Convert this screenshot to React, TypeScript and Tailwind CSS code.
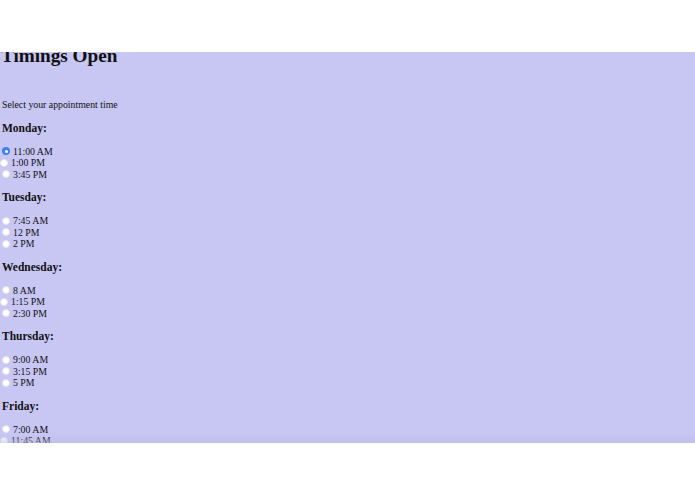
import React from "react";

type Slot = { label: string; tight?: boolean; checked?: boolean };

const schedule: { day: string; slots: Slot[] }[] = [
  {
    day: "Monday:",
    slots: [{ label: "11:00 AM", checked: true }, { label: "1:00 PM", tight: true }, { label: "3:45 PM" }],
  },
  { day: "Tuesday:", slots: [{ label: "7:45 AM" }, { label: "12 PM" }, { label: "2 PM" }] },
  { day: "Wednesday:", slots: [{ label: "8 AM" }, { label: "1:15 PM", tight: true }, { label: "2:30 PM" }] },
  { day: "Thursday:", slots: [{ label: "9:00 AM" }, { label: "3:15 PM" }, { label: "5 PM" }] },
  { day: "Friday:", slots: [{ label: "7:00 AM" }, { label: "11:45 AM", tight: true }] },
];

const Radio = ({ checked, tight }: { checked?: boolean; tight?: boolean }) =>
  checked ? (
    <span className="ml-[2px] mr-[3px] flex h-[8px] w-[8px] shrink-0 items-center justify-center rounded-full bg-[#3b82f6]">
      <span className="h-[3px] w-[3px] rounded-full bg-white" />
    </span>
  ) : (
    <span
      className={
        tight
          ? "ml-[0px] mr-[3px] h-[8px] w-[8px] shrink-0 rounded-full border border-[#e4e4ec] bg-white"
          : "ml-[2px] mr-[3px] h-[8px] w-[8px] shrink-0 rounded-full border border-[#e4e4ec] bg-white"
      }
    />
  );

export default function App() {
  return (
    <div className="h-[494px] w-[695px] bg-white font-['Liberation_Serif',serif] text-[#111]">
      <div className="h-[52px]" />
      <div className="relative h-[391px] overflow-hidden bg-[#c8c6f3]">
        <div className="-mt-[7px] flex flex-col">
          <h1 className="h-[22px] pl-[1px] text-[19.2px] font-bold leading-[22px]">Timings Open</h1>
          <p className="mt-[31.5px] h-[12px] pl-[2px] text-[9.8px] leading-[12px]">Select your appointment time</p>
          {schedule.map((d) => (
            <div key={d.day} className="flex flex-col">
              <h3 className="mt-[11px] h-[13px] pl-[2px] text-[11.5px] font-bold leading-[13px]">{d.day}</h3>
              <div className="mt-[11px] flex flex-col">
                {d.slots.map((s) => (
                  <label key={s.label} className="flex h-[11.5px] items-center text-[9.8px] leading-[11.5px]">
                    <Radio checked={s.checked} tight={s.tight} />
                    <span>{s.label}</span>
                  </label>
                ))}
              </div>
            </div>
          ))}
        </div>
        <div className="pointer-events-none absolute bottom-0 left-0 h-[10px] w-full bg-gradient-to-b from-transparent to-[#b9b8e2]/50" />
      </div>
    </div>
  );
}
